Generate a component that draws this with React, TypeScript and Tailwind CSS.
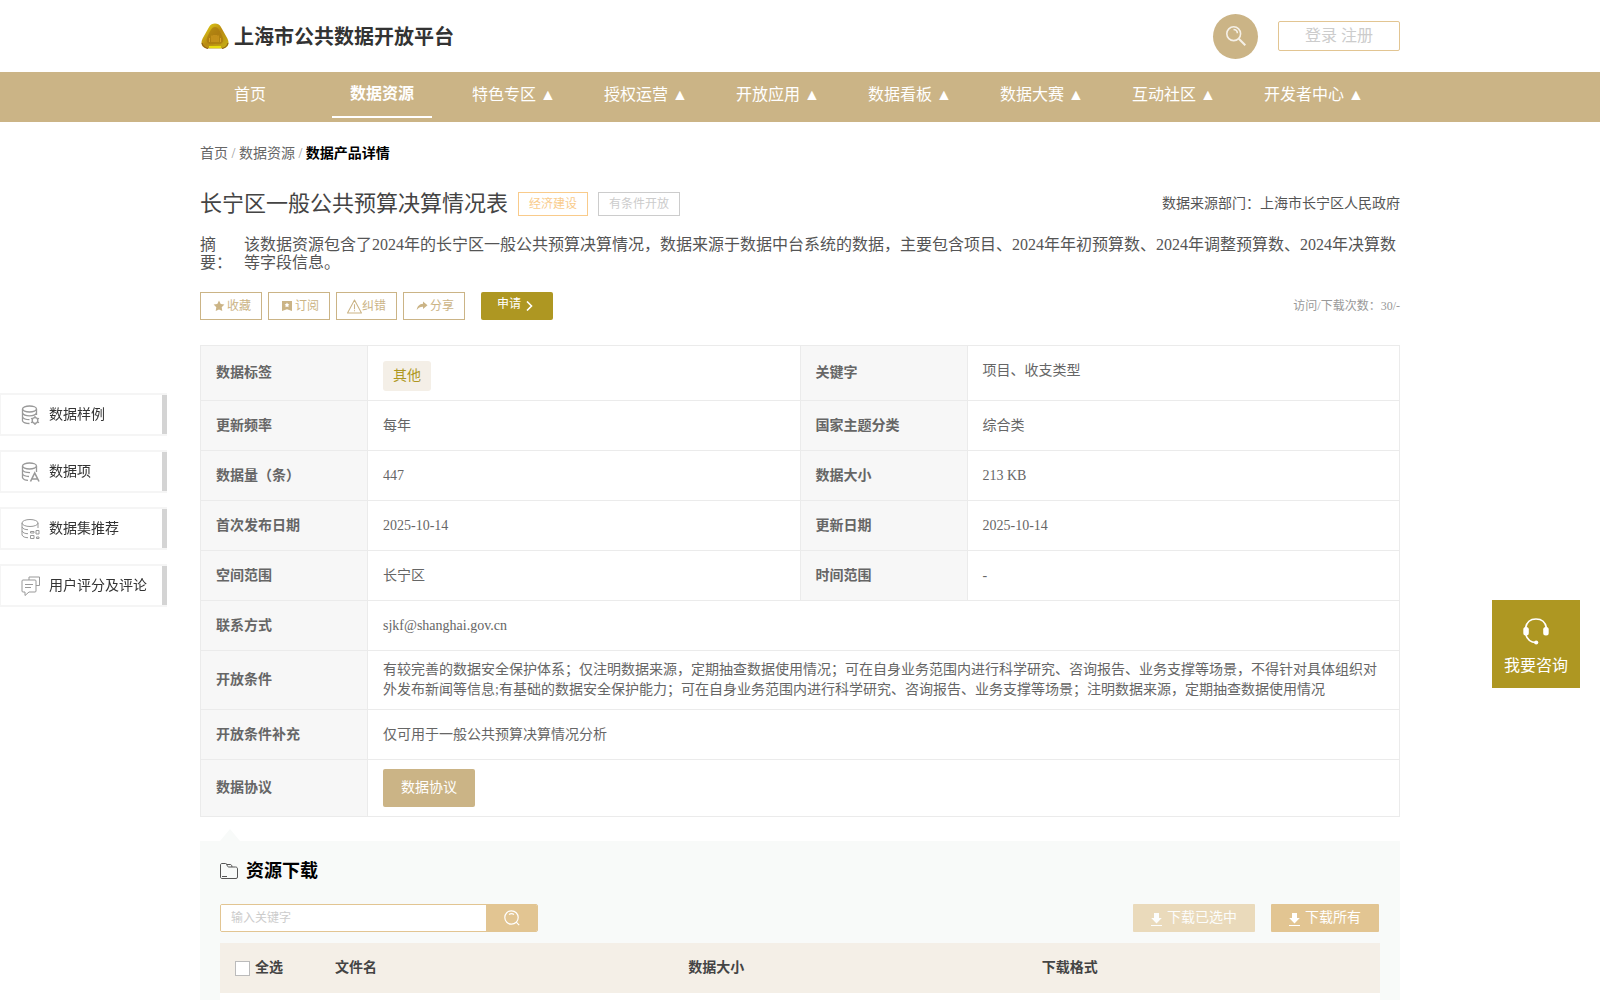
import type { ReactNode } from "react";

const navItems = [
  { label: "首页" },
  { label: "数据资源", active: true },
  { label: "特色专区", menu: true },
  { label: "授权运营", menu: true },
  { label: "开放应用", menu: true },
  { label: "数据看板", menu: true },
  { label: "数据大赛", menu: true },
  { label: "互动社区", menu: true },
  { label: "开发者中心", menu: true },
];

const pairRows = [
  ["更新频率", "每年", "国家主题分类", "综合类"],
  ["数据量（条）", "447", "数据大小", "213 KB"],
  ["首次发布日期", "2025-10-14", "更新日期", "2025-10-14"],
  ["空间范围", "长宁区", "时间范围", "-"],
];

const sideItems: { label: string; icon: ReactNode }[] = [
  {
    label: "数据样例",
    icon: (
      <>
        <ellipse cx="8.500" cy="4" rx="7" ry="3" />
        <path d="M1.500 4v12c1 1.800 3.500 2.500 7 2.500M15.500 4v6" />
        <path d="M1.500 8c1 2.200 4 2.800 7 2.800s6-.6 7-2.800M1.500 12c1 2 3.500 2.700 7 2.700" />
        <circle cx="14" cy="15.500" r="2.800" />
        <path d="M14 11v1.500M14 18.500V20M10 13.200l1.300.8M16.700 17l1.300.8M10 17.800l1.300-.8M16.700 14l1.300-.8" />
      </>
    ),
  },
  {
    label: "数据项",
    icon: (
      <>
        <ellipse cx="8.500" cy="4" rx="7" ry="3" />
        <path d="M1.500 4v12M15.500 4v6" />
        <path d="M1.500 8c1 2 3.500 2.600 7.500 2.600M1.500 12c1 1.800 3 2.400 6.500 2.500M1.500 16c1 1.600 3 2.300 5.500 2.400" />
        <path d="M9.500 19.500 13.700 11l4.300 8.500M11 17h5.500" strokeWidth="1.600" />
      </>
    ),
  },
  {
    label: "数据集推荐",
    icon: (
      <g strokeWidth="1">
        <ellipse cx="9" cy="4" rx="8" ry="3.500" />
        <path d="M1 4v12M17 4v5M1 8c1 2 3 2.600 6 2.700M1 12c1 2 3 2.600 6 2.700M1 16c1 2 3 2.600 6 2.700" />
        <path d="M9.500 12.500h3.500V14H9.500zM15 11.500h3v3.500h-3zM9.500 16.500H13v3H9.500zM15.500 18h2.500v1.500h-2.500z" />
      </g>
    ),
  },
  {
    label: "用户评分及评论",
    icon: (
      <g strokeWidth="1">
        <path d="M8 4V1h10.500v8.500H15" />
        <path d="M2 4h12a1 1 0 0 1 1 1v10a1 1 0 0 1-1 1H8l-4 3.500V16H2a1 1 0 0 1-1-1V5a1 1 0 0 1 1-1z" />
        <path d="M4 8.500h8M4 11.500h6" />
      </g>
    ),
  },
];

const StarIcon = () => (
  <svg className="size-3 shrink-0" viewBox="0 0 12 12" fill="currentColor" aria-hidden="true">
    <path d="M6 .6 7.700 3.900l3.700.6-2.700 2.700.6 3.900L6 9.500l-3.300 1.600.6-3.900L.6 4.500l3.700-.6z" />
  </svg>
);

const SubscribeIcon = () => (
  <svg className="size-3 shrink-0" viewBox="0 0 12 12" fill="currentColor" aria-hidden="true">
    <path
      fillRule="evenodd"
      d="M1 1h10v10L6 9.300 1 11zM6 2.600l-.8 1.500-1.600.3L4.700 5.600l-.2 1.700L6 6.600l1.500.7-.2-1.700 1.100-1.200-1.600-.3z"
    />
  </svg>
);

const WarnIcon = () => (
  <svg className="size-[15px] shrink-0" viewBox="0 0 14 14" fill="none" stroke="currentColor" aria-hidden="true">
    <path d="M7 1 13.500 13H.5zM7 5v4.500M7 10.500v1" strokeLinejoin="round" />
  </svg>
);

const ShareIcon = () => (
  <svg className="size-3 shrink-0" viewBox="0 0 12 12" fill="currentColor" aria-hidden="true">
    <path d="M7 1.500 11.500 5.300 7 9V6.800C4.500 6.700 2.500 7.500.8 10 1 6.500 3.300 4 7 3.700z" />
  </svg>
);

const DownloadIcon = () => (
  <svg className="mt-[2px] h-[13px] w-[11px] shrink-0" viewBox="0 0 11 13" fill="currentColor" aria-hidden="true">
    <path d="M3 0h5v5h2.800L5.500 10.500.2 5H3zM0 12h11v1H0z" />
  </svg>
);

function Logo() {
  return (
    <svg className="h-[26px] w-7" viewBox="0 0 28 26" aria-hidden="true">
      <defs>
        <linearGradient id="gold" x1="0" y1="0" x2="1" y2="1">
          <stop offset="0" stopColor="#e8dc18" />
          <stop offset=".5" stopColor="#b98a12" />
          <stop offset="1" stopColor="#c8b312" />
        </linearGradient>
      </defs>
      <path
        d="M14 .5c2.500 0 4.500 1 5.800 3.200l6.600 11.800c1.800 3.500 1.400 6.500-.8 8.500-1.300 1.200-3 1.500-5 1.500H7.400c-2 0-3.700-.3-5-1.500-2.200-2-2.600-5-.8-8.500L8.200 3.700C9.500 1.500 11.500.5 14 .5z"
        fill="url(#gold)"
      />
      <path d="M14 4c3 0 4.500 3.500 6.500 7.500s2.500 6.500.5 8.500-4 1-7 1-5 1-7-1-1.500-4.500.5-8.500S11 4 14 4z" fill="#a8780f" opacity=".7" />
      <path d="M8.500 19v-4M11 19v-6.500M13 19v-7M15 19v-7M17 19v-6.500M19.500 19v-4" stroke="#d9a325" />
      <path d="M8 24h12" stroke="#e6dc10" strokeWidth="2" />
      <path d="M1 20c.8 3 3 5 6 5.500M27 20c-.8 3-3 5-6 5.500" stroke="#8a5a1c" fill="none" />
    </svg>
  );
}

function Header() {
  return (
    <header className="mx-auto flex h-[72px] w-full max-w-[1200px] items-center justify-between">
      <a href="#" className="flex items-center gap-[5px] pl-px">
        <Logo />
        <span className="pt-[2px] text-xl leading-6 font-bold text-[#333]">上海市公共数据开放平台</span>
      </a>
      <div className="flex items-center gap-5">
        <button
          type="button"
          aria-label="搜索"
          className="flex size-[45px] items-center justify-center rounded-full bg-[#cbb486] text-[#f5f0e7]"
        >
          <svg className="size-5" viewBox="0 0 20 20" fill="none" stroke="currentColor" strokeWidth="1.600" aria-hidden="true">
            <circle cx="7.700" cy="7.700" r="6.900" />
            <path d="M7.500 3.500c2.400 0 3.800 1.500 3.900 3.800" />
            <path d="m12.800 12.800 6.500 6.500" strokeWidth="2" />
          </svg>
        </button>
        <button
          type="button"
          className="h-[30px] w-[122px] rounded-xs border border-[#e2c592] text-base leading-6 text-[#ccc]"
        >
          登录 注册
        </button>
      </div>
    </header>
  );
}

function Nav() {
  return (
    <nav className="bg-[#cbb486]">
      <ul className="mx-auto flex h-[50px] w-full max-w-[1200px] gap-8 text-white">
        {navItems.map((item) => (
          <li key={item.label}>
            <a
              href="#"
              className={`flex h-[46px] min-w-[100px] items-center justify-center px-2 text-base whitespace-nowrap ${
                item.active ? "border-b-2 border-white font-bold" : ""
              }`}
            >
              {item.label}
              {item.menu ? " ▲" : ""}
            </a>
          </li>
        ))}
      </ul>
    </nav>
  );
}

function ActionButton({ icon, label }: { icon: ReactNode; label: string }) {
  return (
    <button
      type="button"
      className="flex h-7 items-center gap-[2px] border border-[#cbb486] pr-[10px] pl-3 text-xs text-[#cbb486]"
    >
      {icon}
      {label}
    </button>
  );
}

function HeadCell({ children }: { children: ReactNode }) {
  return (
    <th scope="row" className="border border-[#ebebeb] bg-[#f7f7f7] px-[15px] text-left font-bold">
      {children}
    </th>
  );
}

function Cell({ children, span }: { children: ReactNode; span?: number }) {
  return (
    <td colSpan={span} className="border border-[#ebebeb] px-[15px]">
      {children}
    </td>
  );
}

function DetailTable() {
  return (
    <table className="mt-[25px] w-full table-fixed border-collapse text-sm leading-5 text-[#666]">
      <colgroup>
        <col className="w-[167px]" />
        <col />
        <col className="w-[167px]" />
        <col />
      </colgroup>
      <tbody>
        <tr className="h-[55px]">
          <HeadCell>数据标签</HeadCell>
          <Cell>
            <span className="mt-[5px] inline-block rounded-[3px] bg-[#f4efe7] px-[10px] py-[5px] text-[#ae9722]">其他</span>
          </Cell>
          <HeadCell>关键字</HeadCell>
          <td className="border border-[#ebebeb] px-[15px] pb-1">项目、收支类型</td>
        </tr>
        {pairRows.map(([k1, v1, k2, v2]) => (
          <tr className="h-[50px]" key={k1}>
            <HeadCell>{k1}</HeadCell>
            <Cell>{v1}</Cell>
            <HeadCell>{k2}</HeadCell>
            <Cell>{v2}</Cell>
          </tr>
        ))}
        <tr className="h-[50px]">
          <HeadCell>联系方式</HeadCell>
          <Cell span={3}>sjkf@shanghai.gov.cn</Cell>
        </tr>
        <tr className="h-[59px]">
          <HeadCell>开放条件</HeadCell>
          <Cell span={3}>
            有较完善的数据安全保护体系；仅注明数据来源，定期抽查数据使用情况；可在自身业务范围内进行科学研究、咨询报告、业务支撑等场景，不得针对具体组织对外发布新闻等信息;有基础的数据安全保护能力；可在自身业务范围内进行科学研究、咨询报告、业务支撑等场景；注明数据来源，定期抽查数据使用情况
          </Cell>
        </tr>
        <tr className="h-[50px]">
          <HeadCell>开放条件补充</HeadCell>
          <Cell span={3}>仅可用于一般公共预算决算情况分析</Cell>
        </tr>
        <tr className="h-[57px]">
          <HeadCell>数据协议</HeadCell>
          <Cell span={3}>
            <button type="button" className="block h-[38px] w-[92px] rounded-xs bg-[#cbb486] text-white">
              数据协议
            </button>
          </Cell>
        </tr>
      </tbody>
    </table>
  );
}

function Downloads() {
  return (
    <section className="mt-3 flex grow flex-col">
      <svg className="ml-5 block h-3 w-5" viewBox="0 0 20 12" aria-hidden="true">
        <path d="M10 0 20 12H0z" fill="#f8faf9" />
      </svg>
      <div className="flex grow flex-col bg-[#f8faf9] px-5 pt-[18px]">
        <h2 className="flex items-center gap-2 text-lg leading-6 font-bold text-black">
          <svg className="h-4 w-[18px]" viewBox="0 0 18 16" fill="none" stroke="#555" strokeWidth="1" aria-hidden="true">
            <path d="M2 .5h3.500c1 0 1.300.5 1.500 1.500.3 1.300.8 2 2 2h6.500c1.300 0 2 .7 2 2v8c0 1-.5 1.500-1.500 1.500H2c-1 0-1.500-.5-1.500-1.500V2C.5 1 1 .5 2 .5z" />
            <path d="M6.500 1.500h4c.8 0 1.300.8 1.500 2.500M2 13.500h5" />
          </svg>
          资源下载
        </h2>
        <div className="mt-[21px] flex items-center justify-between">
          <form className="flex h-7 w-[318px] overflow-hidden rounded-xs border border-[#e2c592]">
            <input
              type="text"
              aria-label="输入关键字"
              placeholder="输入关键字"
              className="min-w-0 flex-1 bg-white px-[10px] text-xs outline-none placeholder:text-[#ccc]"
            />
            <button type="button" aria-label="查询" className="flex w-[51px] items-center justify-center bg-[#e2c592] text-white">
              <svg className="size-4" viewBox="0 0 16 16" fill="none" stroke="currentColor" strokeWidth="1.200" aria-hidden="true">
                <circle cx="7.500" cy="7.500" r="6.700" />
                <path d="M5 4.500c1.500-1 3.500-1 5 0M12.200 12.200l3 3" />
              </svg>
            </button>
          </form>
          <div className="flex gap-4 pr-px text-sm text-white">
            <button
              type="button"
              disabled
              className="flex h-7 w-[122px] items-center justify-center gap-[5px] rounded-[1px] bg-[#e2c592] opacity-60"
            >
              <DownloadIcon />
              下载已选中
            </button>
            <button
              type="button"
              className="flex h-7 w-[108px] items-center justify-center gap-[5px] rounded-[1px] bg-[#e2c592]"
            >
              <DownloadIcon />
              下载所有
            </button>
          </div>
        </div>
        <table className="mt-[11px] w-full table-fixed text-left text-sm text-[#444]">
          <thead>
            <tr className="h-[50px] bg-[#f4efe7]">
              <th className="w-[100px] pl-[15px]">
                <label className="flex items-center gap-[5px]">
                  <input type="checkbox" className="size-[15px] appearance-none border border-[#bbb] bg-white" />
                  全选
                </label>
              </th>
              <th className="pl-[15px]">文件名</th>
              <th className="pl-[15px]">数据大小</th>
              <th className="pl-[15px]">下载格式</th>
            </tr>
          </thead>
        </table>
        <div className="grow bg-white" />
      </div>
    </section>
  );
}

function SideMenu() {
  return (
    <aside className="fixed top-[393px] left-0 flex flex-col gap-[14px]">
      {sideItems.map((item) => (
        <a
          href="#"
          key={item.label}
          className="flex h-[43px] items-center justify-between border-2 border-l border-r-0 border-[#f5f5f5] bg-white text-sm text-[#333]"
        >
          <span className="flex w-[161px] items-center gap-[9px] pl-5">
            <svg className="h-5 w-[19px]" viewBox="0 0 19 20" fill="none" stroke="#999" strokeWidth="1.300" aria-hidden="true">
              {item.icon}
            </svg>
            {item.label}
          </span>
          <span className="h-full w-[5px] bg-[#d4d4d4]" />
        </a>
      ))}
    </aside>
  );
}

function ConsultButton() {
  return (
    <button
      type="button"
      className="fixed top-[600px] right-5 flex size-[88px] flex-col items-center gap-[9px] bg-[#ae9722] pt-[18px] text-base leading-6 text-white"
    >
      <svg className="h-[27px] w-[26px]" viewBox="0 0 26 27" fill="none" stroke="currentColor" aria-hidden="true">
        <path d="M2.500 10C3.500 4.500 7.500 1 13 1s9.500 3.500 10.500 9" strokeWidth="1.600" />
        <path d="M2.500 16c1.500 5 5 8.500 10.500 8.500" strokeWidth="1.600" />
        <rect x=".3" y="9" width="5.500" height="8.500" rx="2.500" fill="currentColor" stroke="none" />
        <rect x="20.200" y="9" width="5.500" height="8.500" rx="2.500" fill="currentColor" stroke="none" />
        <circle cx="13.200" cy="24.500" r="2.100" fill="currentColor" stroke="none" />
      </svg>
      我要咨询
    </button>
  );
}

export default function App() {
  return (
    <div className="flex min-h-screen flex-col bg-white font-['Liberation_Serif','Noto_Sans_CJK_SC',serif] text-[#555]">
      <Header />
      <Nav />
      <main className="mx-auto flex w-full max-w-[1200px] grow flex-col">
        <nav aria-label="面包屑" className="mt-[22px] text-sm leading-5 text-[#666]">
          <a href="#">首页</a> <span className="text-[#999]">/</span> <a href="#">数据资源</a>{" "}
          <span className="text-[#999]">/</span> <strong className="text-black">数据产品详情</strong>
        </nav>

        <div className="mt-[26px] flex items-center justify-between">
          <div className="flex items-center gap-[10px]">
            <h1 className="text-[22px] leading-7 text-[#444]">长宁区一般公共预算决算情况表</h1>
            <span className="flex h-6 items-center border border-[#f9cb8b] px-[10px] text-xs text-[#f9cb8b]">经济建设</span>
            <span className="flex h-6 items-center border border-[#ccc] px-[10px] text-xs text-[#ccc]">有条件开放</span>
          </div>
          <p className="text-sm">数据来源部门：上海市长宁区人民政府</p>
        </div>

        <div className="mt-[18px] flex text-base leading-[18px]">
          <span className="w-11 shrink-0">摘 要：</span>
          <p>
            该数据资源包含了2024年的长宁区一般公共预算决算情况，数据来源于数据中台系统的数据，主要包含项目、2024年年初预算数、2024年调整预算数、2024年决算数等字段信息。
          </p>
        </div>

        <div className="mt-5 flex items-center justify-between">
          <div className="flex gap-[6px]">
            <ActionButton icon={<StarIcon />} label="收藏" />
            <ActionButton icon={<SubscribeIcon />} label="订阅" />
            <button
              type="button"
              className="flex h-7 items-center border border-[#cbb486] pr-[10px] pl-[10px] text-xs text-[#cbb486]"
            >
              <WarnIcon />
              纠错
            </button>
            <ActionButton icon={<ShareIcon />} label="分享" />
            <button
              type="button"
              className="ml-[10px] flex h-7 w-[72px] items-center gap-[5px] rounded-xs bg-[#ae9722] pl-4 text-xs text-white"
            >
              <span className="pb-1">申请</span>
              <svg className="h-[10px] w-[7px]" viewBox="0 0 7 10" fill="none" stroke="currentColor" strokeWidth="1.600" aria-hidden="true">
                <path d="m1 .5 4.500 4.500L1 9.500" />
              </svg>
            </button>
          </div>
          <p className="text-xs text-[#999]">访问/下载次数：30/-</p>
        </div>

        <DetailTable />
        <Downloads />
      </main>
      <SideMenu />
      <ConsultButton />
    </div>
  );
}
